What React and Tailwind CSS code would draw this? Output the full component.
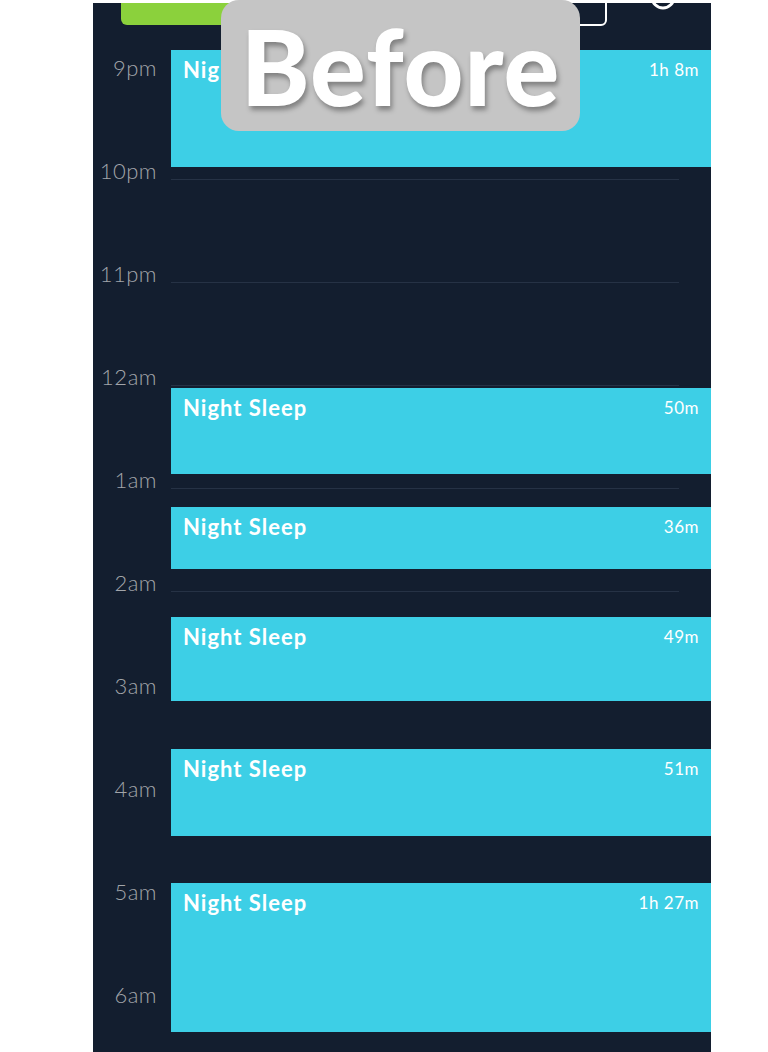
import React from "react";

const PX_PER_MIN = 103 / 60;
const LINE_OFFSET = 26; // y of the 9pm line inside the timeline

const hours = ["9pm", "10pm", "11pm", "12am", "1am", "2am", "3am", "4am", "5am", "6am"];

// start is minutes after 9pm, duration in minutes
const sleeps = [
  { start: -15, duration: 68, label: "1h 8m" },
  { start: 182, duration: 50, label: "50m" },
  { start: 251, duration: 36, label: "36m" },
  { start: 315, duration: 49, label: "49m" },
  { start: 392, duration: 51, label: "51m" },
  { start: 470, duration: 87, label: "1h 27m" },
];

function HourRow({ label }) {
  return (
    <div className="flex h-[103px]">
      <div className="w-[64px] text-right text-[22px] leading-[28px] tracking-[0.5px] text-[#a2a5aa] font-light">
        {label}
      </div>
      <div className="flex-1 ml-[14px] mr-[32px] mt-[22px] h-0 border-t border-[#263245]" />
    </div>
  );
}

function SleepBlock({ start, duration, label }) {
  const top = LINE_OFFSET + start * PX_PER_MIN;
  const height = duration * PX_PER_MIN;
  return (
    <div
      className="absolute left-[78px] right-0 bg-[#3dcfe6] flex items-start justify-between px-[12px] pt-[6px]"
      style={{ top, height }}
    >
      <span className="text-white font-bold text-[22px] leading-[28px] tracking-[1px]">Night Sleep</span>
      <span className="text-white text-[17px] leading-[28px] tracking-[0.5px]">{label}</span>
    </div>
  );
}

export default function App() {
  return (
    <div className="min-h-screen bg-white font-['Lato','Noto_Sans',sans-serif] relative overflow-hidden">
      <div className="ml-[93px] mt-[3px] w-[618px] bg-[#131e2f]">
        {/* header, mostly cut off at the top of the screen */}
        <div className="h-[47px] overflow-hidden flex items-start">
          <div className="ml-[28px] -mt-[20px] h-[42px] w-[190px] rounded-md bg-[#8bd13c]" />
          <div className="ml-auto -mt-[20px] h-[43px] w-[120px] rounded-md border-2 border-white" />
          <svg className="ml-[32px] mr-[28px] -mt-[16px]" width="44" height="26" viewBox="0 0 44 26" fill="none">
            <circle cx="24" cy="10" r="11" stroke="white" strokeWidth="3" />
            <path d="M3 4 C5 10 9 12 13 11" stroke="white" strokeWidth="3" strokeLinecap="round" />
          </svg>
        </div>

        {/* timeline */}
        <div className="relative pt-[4px]">
          {hours.map((h) => (
            <HourRow key={h} label={h} />
          ))}
          {sleeps.map((s, i) => (
            <SleepBlock key={i} {...s} />
          ))}
        </div>
      </div>

      {/* "Before" tag over the top */}
      <div className="absolute left-[221px] top-0 w-[359px] h-[131px] rounded-[18px] bg-[#c5c5c5] flex items-center justify-center">
        <span className="text-white font-black text-[104px] leading-none tracking-[1px] [text-shadow:2px_4px_5px_rgba(0,0,0,0.35)]">
          Before
        </span>
      </div>
    </div>
  );
}
